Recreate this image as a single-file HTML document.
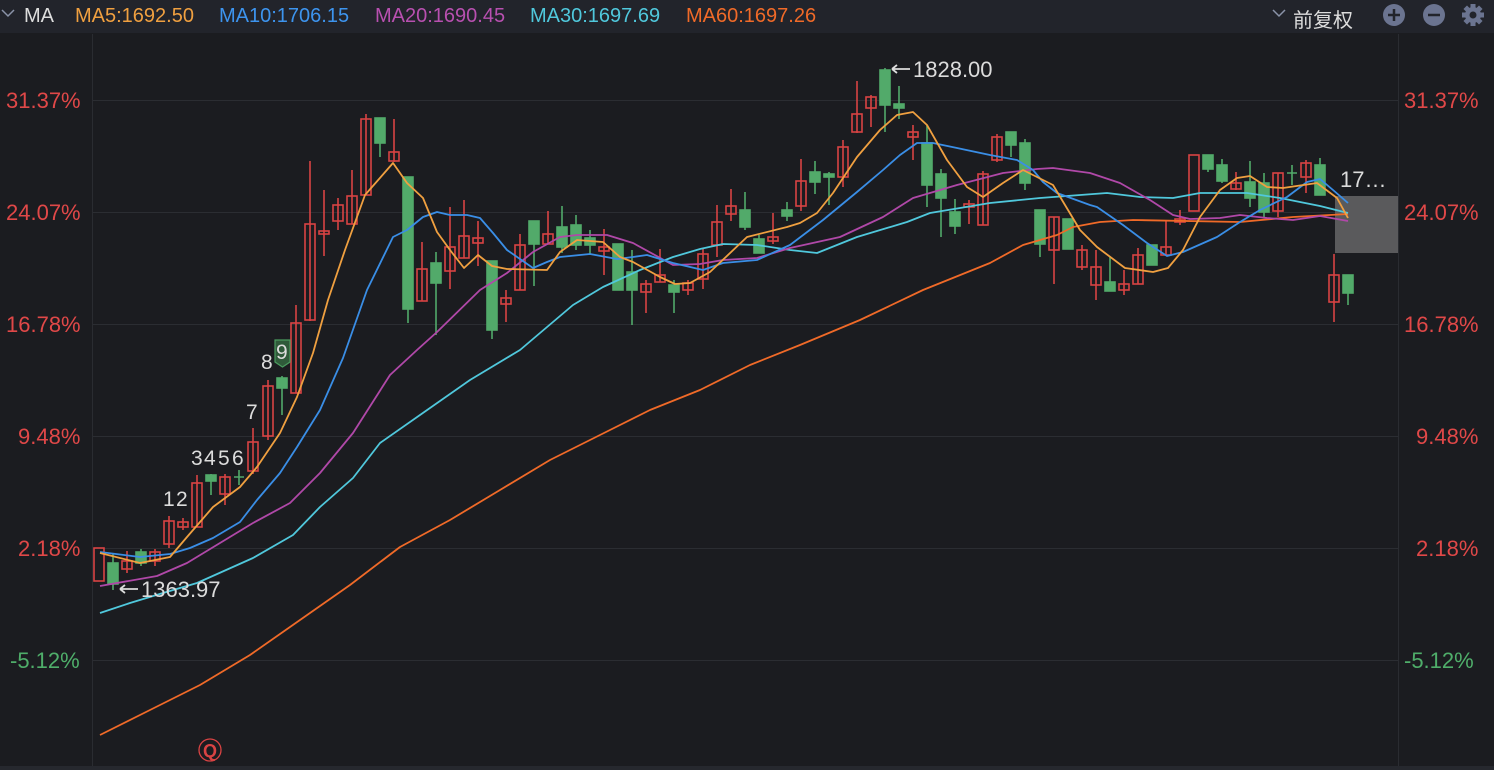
<!DOCTYPE html>
<html><head><meta charset="utf-8"><style>
html,body{margin:0;padding:0;background:#1b1c20;width:1494px;height:770px;overflow:hidden;font-family:"Liberation Sans","Noto Sans CJK SC",sans-serif}
.hdr{position:absolute;left:0;top:0;width:1494px;height:33px;background:#22242b}
.t{position:absolute;font-size:20px;white-space:nowrap;top:5px}
</style></head><body>
<div class="hdr"></div>
<div class="t" style="left:24px;color:#ddd">MA</div>
<div class="t" style="left:75px;color:#f0a040">MA5:1692.50</div>
<div class="t" style="left:219px;color:#3d94ee">MA10:1706.15</div>
<div class="t" style="left:375px;color:#b850b0">MA20:1690.45</div>
<div class="t" style="left:530px;color:#50c8dc">MA30:1697.69</div>
<div class="t" style="left:686px;color:#f06a28">MA60:1697.26</div>
<div class="t" style="left:1293px;top:4px;color:#ddd">前复权</div>
<svg width="1494" height="770" style="position:absolute;left:0;top:0">
<path d="M2 10 l6 6 l6 -6" stroke="#8a93a8" stroke-width="1.5" fill="none"/>
<path d="M1273 10 l6 6 l6 -6" stroke="#8a93a8" stroke-width="1.5" fill="none"/>
<circle cx="1394" cy="15" r="11" fill="#6b7490"/><path d="M1388 15h12M1394 9v12" stroke="#22242b" stroke-width="2.5"/>
<circle cx="1434" cy="15" r="11" fill="#6b7490"/><path d="M1428 15h12" stroke="#22242b" stroke-width="2.5"/>
<g transform="translate(1473,15)" fill="#6b7490"><circle r="8"/><rect x="-2.5" y="-11" width="5" height="22"/><rect x="-2.5" y="-11" width="5" height="22" transform="rotate(45)"/><rect x="-2.5" y="-11" width="5" height="22" transform="rotate(90)"/><rect x="-2.5" y="-11" width="5" height="22" transform="rotate(135)"/><circle r="3.5" fill="#22242b"/></g>
<rect x="0" y="766" width="1494" height="4" fill="#26282e"/>
<path d="M92.5 34V766M1398.5 34V766" stroke="#2a2c31"/>
<path d="M93 100.5H1398M93 212.5H1398M93 324.5H1398M93 436.5H1398M93 548.5H1398M93 660.5H1398" stroke="#2b2d32"/>
<g font-size="22" font-family="Liberation Sans,sans-serif">
<g fill="#e04848"><text x="6" y="108">31.37%</text><text x="6" y="220">24.07%</text><text x="6" y="332">16.78%</text><text x="18" y="444">9.48%</text><text x="18" y="556">2.18%</text>
<text x="1404" y="108">31.37%</text><text x="1404" y="220">24.07%</text><text x="1404" y="332">16.78%</text><text x="1416" y="444">9.48%</text><text x="1416" y="556">2.18%</text></g>
<g fill="#4fae6a"><text x="10" y="668">-5.12%</text><text x="1404" y="668">-5.12%</text></g>
</g>
<rect x="1335" y="196" width="63" height="57" fill="#5a5a5c"/>
<g stroke-width="1.6">
<g stroke="#d94343" fill="none">
<rect x="94" y="548" width="10" height="33"/>
<path d="M127 551V573"/><rect x="122" y="561" width="10" height="8"/>
<rect x="150" y="552" width="10" height="9"/><path d="M155 549V566"/>
<path d="M169 516V548"/><rect x="164" y="521" width="10" height="23"/>
<path d="M183 518V530"/><rect x="178" y="522" width="10" height="5"/>
<path d="M197 475V527"/><rect x="192" y="483" width="10" height="44"/>
<path d="M225 474V505"/><rect x="220" y="477" width="10" height="17"/>
<path d="M253 428V474"/><rect x="248" y="442" width="10" height="29"/>
<path d="M268 380V440"/><rect x="263" y="386" width="10" height="50"/>
<path d="M296 305V393"/><rect x="291" y="323" width="10" height="70"/>
<path d="M310 161V321"/><rect x="305" y="224" width="10" height="96"/>
<path d="M324 190V256"/><rect x="319" y="231" width="10" height="3"/>
<path d="M338 198V230"/><rect x="333" y="205" width="10" height="16"/>
<path d="M352 170V224"/><rect x="347" y="196" width="10" height="28"/>
<path d="M366 114V195"/><rect x="361" y="119" width="10" height="76"/>
<path d="M394 119V162"/><rect x="389" y="152" width="10" height="9"/>
<path d="M422 242V301"/><rect x="417" y="269" width="10" height="32"/>
<path d="M450 207V289"/><rect x="445" y="247" width="10" height="24"/>
<path d="M464 200V258"/><rect x="459" y="236" width="10" height="22"/>
<path d="M478 221V266"/><rect x="473" y="238" width="10" height="5"/>
<path d="M506 290V322"/><rect x="501" y="298" width="10" height="6"/>
<path d="M520 234V290"/><rect x="515" y="245" width="10" height="45"/>
<path d="M548 211V244"/><rect x="543" y="234" width="10" height="10"/>
<path d="M604 229V275"/><rect x="599" y="247" width="10" height="4"/>
<path d="M646 280V313"/><rect x="641" y="284" width="10" height="8"/>
<path d="M660 249V282"/><rect x="655" y="275" width="10" height="7"/>
<path d="M688 280V295"/><rect x="683" y="283" width="10" height="7"/>
<path d="M703 249V289"/><rect x="698" y="254" width="10" height="25"/>
<path d="M717 205V257"/><rect x="712" y="222" width="10" height="23"/>
<path d="M731 189V221"/><rect x="726" y="206" width="10" height="8"/>
<path d="M773 213V244"/><rect x="768" y="237" width="10" height="4"/>
<path d="M801 159V211"/><rect x="796" y="181" width="10" height="25"/>
<path d="M843 140V187"/><rect x="838" y="147" width="10" height="30"/>
<path d="M857 81V133"/><rect x="852" y="114" width="10" height="18"/>
<path d="M871 95V127"/><rect x="866" y="97" width="10" height="11"/>
<path d="M913 125V160"/><rect x="908" y="132" width="10" height="5"/>
<path d="M969 200V224"/><rect x="964" y="204" width="10" height="3"/>
<path d="M983 171V225"/><rect x="978" y="174" width="10" height="51"/>
<path d="M997 134V162"/><rect x="992" y="137" width="10" height="23"/>
<path d="M1054 217V284"/><rect x="1049" y="217" width="10" height="33"/>
<path d="M1082 245V270"/><rect x="1077" y="250" width="10" height="17"/>
<path d="M1096 250V300"/><rect x="1091" y="267" width="10" height="18"/>
<path d="M1124 270V295"/><rect x="1119" y="284" width="10" height="6"/>
<path d="M1138 248V284"/><rect x="1133" y="255" width="10" height="29"/>
<path d="M1166 220V255"/><rect x="1161" y="247" width="10" height="8"/>
<path d="M1180 210V225"/><rect x="1175" y="219" width="10" height="3"/>
<rect x="1189" y="155" width="10" height="56"/>
<path d="M1236 172V190"/><rect x="1231" y="183" width="10" height="6"/>
<path d="M1278 173V217"/><rect x="1273" y="173" width="10" height="38"/>
<path d="M1306 160V193"/><rect x="1301" y="163" width="10" height="14"/>
<path d="M1334 254V322"/><rect x="1329" y="275" width="10" height="27"/>
</g>
<g stroke="#52aa6a" fill="#52aa6a">
<path d="M113 553V590"/><rect x="108" y="563" width="10" height="21"/>
<path d="M141 549V566"/><rect x="136" y="552" width="10" height="11"/>
<path d="M211 474V495"/><rect x="206" y="475" width="10" height="6"/>
<path d="M239 470V485M234 477H244"/>
<path d="M282 376V415"/><rect x="277" y="378" width="10" height="10"/>
<path d="M380 118V157"/><rect x="375" y="118" width="10" height="25"/>
<path d="M408 177V323"/><rect x="403" y="177" width="10" height="132"/>
<path d="M436 252V335"/><rect x="431" y="263" width="10" height="20"/>
<path d="M492 261V339"/><rect x="487" y="261" width="10" height="69"/>
<path d="M534 221V286"/><rect x="529" y="221" width="10" height="23"/>
<path d="M562 206V253"/><rect x="557" y="227" width="10" height="20"/>
<path d="M576 215V250"/><rect x="571" y="225" width="10" height="20"/>
<path d="M590 230V254"/><rect x="585" y="238" width="10" height="7"/>
<path d="M618 244V290"/><rect x="613" y="244" width="10" height="46"/>
<path d="M632 250V325"/><rect x="627" y="272" width="10" height="18"/>
<path d="M674 280V313"/><rect x="669" y="285" width="10" height="7"/>
<path d="M745 192V230"/><rect x="740" y="210" width="10" height="17"/>
<path d="M759 235V253"/><rect x="754" y="239" width="10" height="14"/>
<path d="M787 202V221"/><rect x="782" y="210" width="10" height="6"/>
<path d="M815 161V194"/><rect x="810" y="172" width="10" height="10"/>
<path d="M829 172V205"/><rect x="824" y="174" width="10" height="3"/>
<path d="M885 68V132"/><rect x="880" y="70" width="10" height="35"/>
<path d="M899 86V119"/><rect x="894" y="104" width="10" height="4"/>
<path d="M927 125V207"/><rect x="922" y="143" width="10" height="42"/>
<path d="M941 169V237"/><rect x="936" y="174" width="10" height="24"/>
<path d="M955 199V234"/><rect x="950" y="212" width="10" height="14"/>
<path d="M1011 132V157"/><rect x="1006" y="132" width="10" height="13"/>
<path d="M1025 139V190"/><rect x="1020" y="143" width="10" height="40"/>
<path d="M1040 210V257"/><rect x="1035" y="210" width="10" height="34"/>
<path d="M1068 219V249"/><rect x="1063" y="219" width="10" height="30"/>
<path d="M1110 257V291"/><rect x="1105" y="282" width="10" height="9"/>
<path d="M1152 245V265"/><rect x="1147" y="245" width="10" height="20"/>
<path d="M1208 155V172"/><rect x="1203" y="155" width="10" height="14"/>
<path d="M1222 159V183"/><rect x="1217" y="165" width="10" height="16"/>
<path d="M1250 161V207"/><rect x="1245" y="182" width="10" height="16"/>
<path d="M1264 173V217"/><rect x="1259" y="183" width="10" height="29"/>
<path d="M1292 165V185M1287 173H1297"/>
<path d="M1320 158V195"/><rect x="1315" y="165" width="10" height="30"/>
<path d="M1348 275V305"/><rect x="1343" y="275" width="10" height="18"/>
</g>
</g>
<g fill="none" stroke-width="1.8" stroke-linejoin="round">
<polyline stroke="#f06a28" points="100,735 150,710 200,685 250,655 300,620 350,585 400,547 450,520 500,490 550,460 600,435 650,410 700,390 750,365 800,345 860,320 923,290 990,263 1023,245 1057,235 1073,227 1100,222 1133,220 1240,222 1293,217 1348,214"/>
<polyline stroke="#50c8dc" points="100,613 130,603 163,593 197,583 253,558 293,535 320,507 353,478 380,443 420,415 470,380 520,350 540,333 573,305 603,287 640,270 673,257 700,249 723,244 757,245 790,250 817,253 857,237 907,222 930,213 990,203 1040,198 1107,193 1140,197 1173,198 1200,193 1247,193 1280,198 1320,206 1348,213"/>
<polyline stroke="#b048a8" points="100,586 157,576 187,563 220,543 253,523 290,503 320,473 353,433 390,375 417,350 437,332 480,290 507,273 533,252 560,237 577,235 607,235 633,243 673,265 700,264 723,260 757,258 790,248 840,237 883,217 913,198 957,185 1003,173 1037,169 1053,168 1090,173 1120,183 1150,200 1173,215 1190,219 1220,218 1240,215 1267,218 1293,220 1320,216 1348,221"/>
<polyline stroke="#3a8ee6" points="100,552 140,557 170,554 190,548 213,538 240,522 257,500 280,473 297,447 320,410 343,358 367,290 393,237 407,230 423,217 437,212 450,215 467,215 480,218 493,233 507,250 533,268 547,262 560,257 590,254 617,259 633,257 647,255 673,263 703,270 723,263 757,260 790,245 823,220 857,192 883,170 900,155 917,143 933,143 957,148 990,155 1017,160 1033,170 1043,182 1057,193 1090,205 1097,207 1123,225 1147,243 1167,256 1183,252 1217,237 1240,222 1260,210 1287,197 1307,182 1320,179 1333,190 1348,203"/>
<polyline stroke="#f0a040" points="100,553 140,563 170,557 187,537 213,507 240,487 257,467 280,433 297,397 313,353 328,300 345,250 365,195 393,163 407,183 423,198 437,232 450,250 464,268 478,255 492,266 507,269 547,270 560,252 577,240 603,242 620,257 633,262 660,277 675,284 690,283 710,272 747,237 787,227 800,223 817,213 833,193 857,157 880,130 897,115 913,112 927,125 947,160 967,187 983,197 1003,183 1023,170 1053,185 1080,230 1097,247 1125,268 1153,272 1168,268 1183,250 1200,217 1220,190 1237,178 1250,176 1267,187 1283,188 1317,183 1337,198 1348,218"/>
</g>
<g font-family="Liberation Sans,sans-serif" font-size="21" fill="#dcdcdc">
<text x="163" y="506">1</text><text x="176" y="506">2</text>
<text x="191" y="465">3</text><text x="204" y="465">4</text><text x="218" y="465">5</text><text x="232" y="465">6</text>
<text x="246" y="419">7</text><text x="261" y="369">8</text>
<path d="M275 340H290V362L282.5 367L275 362Z" fill="#2f5a3a" stroke="#4a9a5e" stroke-width="1.2"/>
<text x="276" y="359">9</text>
<g font-size="22">
<path d="M120 589H138M120 589l5-4M120 589l5 4" stroke="#dcdcdc" stroke-width="1.8" fill="none"/>
<text x="141" y="597">1363.97</text>
<path d="M892 69H910M892 69l5-4M892 69l5 4" stroke="#dcdcdc" stroke-width="1.8" fill="none"/>
<text x="913" y="77">1828.00</text>
<text x="1340" y="187">17…</text>
</g>
</g>
<circle cx="210" cy="750" r="11" fill="none" stroke="#d94343" stroke-width="1.3"/>
<text x="210" y="757" text-anchor="middle" font-family="Liberation Sans,sans-serif" font-size="18" font-weight="bold" fill="#d94343">Q</text>
</svg>
</body></html>
